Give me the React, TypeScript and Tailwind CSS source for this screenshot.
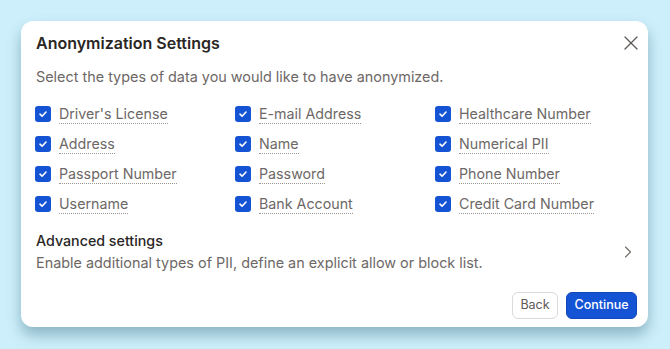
import { X, ChevronRight } from "lucide-react";

const ITEMS = [
  "Driver's License",
  "E-mail Address",
  "Healthcare Number",
  "Address",
  "Name",
  "Numerical PII",
  "Passport Number",
  "Password",
  "Phone Number",
  "Username",
  "Bank Account",
  "Credit Card Number",
];

function CheckBox() {
  return (
    <span className="w-4 h-4 rounded-[3px] bg-[#1553d5] flex items-center justify-center shrink-0">
      <svg width="10" height="10" viewBox="0 0 10 10" fill="none">
        <path d="M2 5.2 L4.1 7.2 L8 3" stroke="white" strokeWidth="1.6" strokeLinecap="round" strokeLinejoin="round" />
      </svg>
    </span>
  );
}

export default function App() {
  return (
    <div
      className="w-[670px] h-[349px] bg-[#cdeffb] pt-[21px] pl-[21px]"
      style={{ fontFamily: "Inter, 'Noto Sans', sans-serif" }}
    >
      <div className="w-[627px] h-[306px] bg-white rounded-[12px] shadow-[0_8px_14px_rgba(60,110,130,0.45)] pl-[15px] pr-[15px] pt-[10px] flex flex-col">
        <div className="flex items-center justify-between h-[24px]">
          <h1 className="text-[16px] font-semibold text-[#2a2624]">Anonymization Settings</h1>
          <X className="w-[24px] h-[24px] text-[#5d5856] mr-[-10px]" strokeWidth={1.3} />
        </div>
        <p className="mt-[12px] text-[14.4px] leading-[20px] text-[#6d6866]">
          Select the types of data you would like to have anonymized.
        </p>
        <div className="mt-[17px] -ml-px grid grid-cols-[200px_200px_1fr] gap-y-[10px]">
          {ITEMS.map((item) => (
            <label key={item} className="flex items-center gap-2 h-[20px]">
              <CheckBox />
              <span className="text-[14.25px] leading-[18px] text-[#6d6866] border-b border-dotted border-[#9b9694]">
                {item}
              </span>
            </label>
          ))}
        </div>
        <div className="mt-[17px] flex items-center justify-between">
          <div>
            <div className="text-[14.25px] leading-[20px] font-medium text-[#2a2624]">Advanced settings</div>
            <div className="mt-[2px] text-[14.4px] leading-[20px] text-[#6d6866]">
              Enable additional types of PII, define an explicit allow or block list.
            </div>
          </div>
          <ChevronRight className="w-[20px] h-[20px] text-[#6d6866] mr-[-5px]" strokeWidth={1.3} />
        </div>
        <div className="mt-[19px] flex justify-end gap-[8px] mr-[-4px]">
          <button className="h-[27px] w-[46px] rounded-[6px] border border-[#dcdad9] text-[12.5px] text-[#5d5856] bg-white">
            Back
          </button>
          <button className="h-[27px] w-[71px] rounded-[6px] bg-[#1553d5] border border-[#1248b8] text-[12.5px] font-medium text-white">
            Continue
          </button>
        </div>
      </div>
    </div>
  );
}
